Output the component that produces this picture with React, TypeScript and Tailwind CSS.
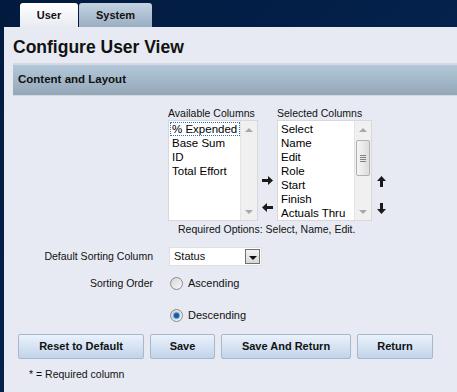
import React from "react";

const font = { fontFamily: "'Liberation Sans', Arial, sans-serif" };

function Scrollbar({ thumb }: { thumb?: boolean }) {
  return (
    <div className="flex w-[17px] flex-col border-l border-[#e4e4e4] bg-[#f0f0f0]">
      <div className="flex h-[17px] items-center justify-center">
        <div className="h-0 w-0 border-x-[4px] border-b-[4px] border-x-transparent border-b-[#a8a8a8]" />
      </div>
      <div className="flex-1 px-[1px]">
        {thumb && (
          <div className="mt-[2px] flex h-[36px] flex-col items-center justify-center gap-[1px] rounded-[2px] border border-[#b0b0b0] bg-gradient-to-r from-[#f6f6f6] to-[#dcdcdc]">
            <div className="h-[1px] w-[6px] bg-[#808080]" />
            <div className="h-[1px] w-[6px] bg-[#808080]" />
            <div className="h-[1px] w-[6px] bg-[#808080]" />
            <div className="h-[1px] w-[6px] bg-[#808080]" />
          </div>
        )}
      </div>
      <div className="flex h-[17px] items-center justify-center">
        <div className="h-0 w-0 border-x-[4px] border-t-[4px] border-x-transparent border-t-[#a8a8a8]" />
      </div>
    </div>
  );
}

function ListBox({ items, width, focus, thumb }: { items: string[]; width: number; focus?: boolean; thumb?: boolean }) {
  return (
    <div className="flex h-[101px] border border-[#d8d8d8] bg-white" style={{ width }}>
      <div className="flex-1 overflow-hidden pt-[1px] pl-[1px] text-[11.5px] leading-[14px] text-black">
        {items.map((it, i) => (
          <div
            key={it}
            className={
              "whitespace-nowrap px-[2px] " +
              (focus && i === 0 ? "outline outline-1 outline-dotted outline-[#3070c0] -outline-offset-1" : "")
            }
          >
            {it}
          </div>
        ))}
      </div>
      <Scrollbar thumb={thumb} />
    </div>
  );
}

function ArrowRight() {
  return (
    <svg width="11" height="9" viewBox="0 0 11 9">
      <path d="M0 3h6V0l5 4.5L6 9V6H0z" fill="#1a1a1a" />
    </svg>
  );
}
function ArrowLeft() {
  return (
    <svg width="11" height="9" viewBox="0 0 11 9">
      <path d="M11 3H5V0L0 4.5 5 9V6h6z" fill="#1a1a1a" />
    </svg>
  );
}
function ArrowUp() {
  return (
    <svg width="9" height="11" viewBox="0 0 9 11">
      <path d="M3 11V5H0l4.5-5L9 5H6v6z" fill="#1a1a1a" />
    </svg>
  );
}
function ArrowDown() {
  return (
    <svg width="9" height="11" viewBox="0 0 9 11">
      <path d="M3 0v6H0l4.5 5L9 6H6V0z" fill="#1a1a1a" />
    </svg>
  );
}

function Radio({ checked }: { checked?: boolean }) {
  return (
    <div className="flex h-[13px] w-[13px] items-center justify-center rounded-full border border-[#8a8a8a] bg-gradient-to-br from-[#d4d4d4] to-[#fafafa]">
      {checked && <div className="h-[5px] w-[5px] rounded-full bg-[#1c5a9a] shadow-[0_0_1px_1px_#5aa0e0]" />}
    </div>
  );
}

function Btn({ children, w }: { children: React.ReactNode; w: string }) {
  return (
    <button
      className={
        "flex h-[25px] items-center justify-center rounded-[2px] border border-[#a8b8ca] bg-gradient-to-b from-[#eaf2fc] to-[#c2d4ea] text-[11px] font-bold text-[#111] " +
        w
      }
    >
      {children}
    </button>
  );
}

export default function App() {
  return (
    <div className="h-[392px] w-[457px] overflow-hidden bg-gradient-to-br from-[#021a3e] to-[#06295a]" style={font}>
      {/* tabs */}
      <div className="flex h-[27px] items-end pl-[20px]">
        <div className="flex h-[24px] w-[58px] items-center justify-center rounded-t-[3px] bg-gradient-to-b from-[#ffffff] to-[#e8ebf2] text-[11px] font-bold text-[#111]">
          User
        </div>
        <div className="ml-[1px] flex h-[24px] w-[73px] items-center justify-center rounded-t-[3px] bg-gradient-to-b from-[#c4d3e2] to-[#9aaec2] text-[11px] font-bold text-[#111]">
          System
        </div>
      </div>
      {/* body */}
      <div className="ml-[4px] h-[365px] bg-[#e7eaf2] pl-[9px]">
        <div className="pt-[11px] text-[17.5px] font-bold leading-[18px] text-[#111]">Configure User View</div>
        <div className="mt-[7px] border-t-2 border-[#d6dae0]">
          <div className="flex h-[30px] items-center bg-gradient-to-b from-[#b3c8da] to-[#93a7b8] pl-[5px] text-[11.5px] font-bold text-[#111]">
            Content and Layout
          </div>
          <div className="h-[1px] bg-[#d6dae0]" />
        </div>

        {/* columns */}
        <div className="mt-[11px] flex pl-[155px]">
          <div className="flex flex-col">
            <div className="h-[13px] whitespace-nowrap text-[10.5px] leading-[13px] text-[#111]">Available Columns</div>
            <ListBox items={["% Expended", "Base Sum", "ID", "Total Effort"]} width={90} focus />
          </div>
          <div className="flex w-[19px] flex-col items-center pt-[69px]">
            <ArrowRight />
            <div className="h-[18px]" />
            <ArrowLeft />
          </div>
          <div className="flex flex-col">
            <div className="h-[13px] whitespace-nowrap text-[10.5px] leading-[13px] text-[#111]">Selected Columns</div>
            <ListBox
              items={["Select", "Name", "Edit", "Role", "Start", "Finish", "Actuals Thru"]}
              width={95}
              thumb
            />
          </div>
          <div className="flex w-[19px] flex-col items-center pt-[69px]">
            <ArrowUp />
            <div className="h-[16px]" />
            <ArrowDown />
          </div>
        </div>
        <div className="mt-[2px] pl-[165px] text-[10.5px] leading-[13px] text-[#111]">Required Options: Select, Name, Edit.</div>

        {/* sorting */}
        <div className="mt-[11px] flex h-[19px] items-center">
          <div className="w-[140px] text-right text-[10.5px] leading-[13px] text-[#111]">Default Sorting Column</div>
          <div className="ml-[16px] flex h-[19px] w-[93px] items-center justify-between border border-[#e0e0e0] bg-white pl-[4px] pr-[1px] text-[11px] text-[#111]">
            <span>Status</span>
            <div className="flex h-[15px] w-[15px] items-center justify-center border border-[#707070] bg-gradient-to-b from-[#f4f4f4] to-[#d8d8d8]">
              <div className="mt-[2px] h-0 w-0 border-x-[4px] border-t-[4px] border-x-transparent border-t-[#111]" />
            </div>
          </div>
        </div>
        <div className="mt-[11px] flex h-[13px] items-center">
          <div className="w-[140px] text-right text-[10.5px] leading-[13px] text-[#111]">Sorting Order</div>
          <div className="ml-[17px] flex items-center gap-[5px] text-[11px] leading-[13px] text-[#111]">
            <Radio />
            <span>Ascending</span>
          </div>
        </div>
        <div className="mt-[19px] flex h-[13px] items-center">
          <div className="w-[140px]" />
          <div className="ml-[17px] flex items-center gap-[5px] text-[11px] leading-[13px] text-[#111]">
            <Radio checked />
            <span>Descending</span>
          </div>
        </div>

        {/* buttons */}
        <div className="mt-[12px] flex gap-[6px] pl-[5px]">
          <Btn w="w-[126px]">Reset to Default</Btn>
          <Btn w="w-[65px]">Save</Btn>
          <Btn w="w-[130px]">Save And Return</Btn>
          <Btn w="w-[76px]">Return</Btn>
        </div>
        <div className="mt-[9px] pl-[16px] text-[10.5px] leading-[13px] text-[#111]">* = Required column</div>
      </div>
    </div>
  );
}
